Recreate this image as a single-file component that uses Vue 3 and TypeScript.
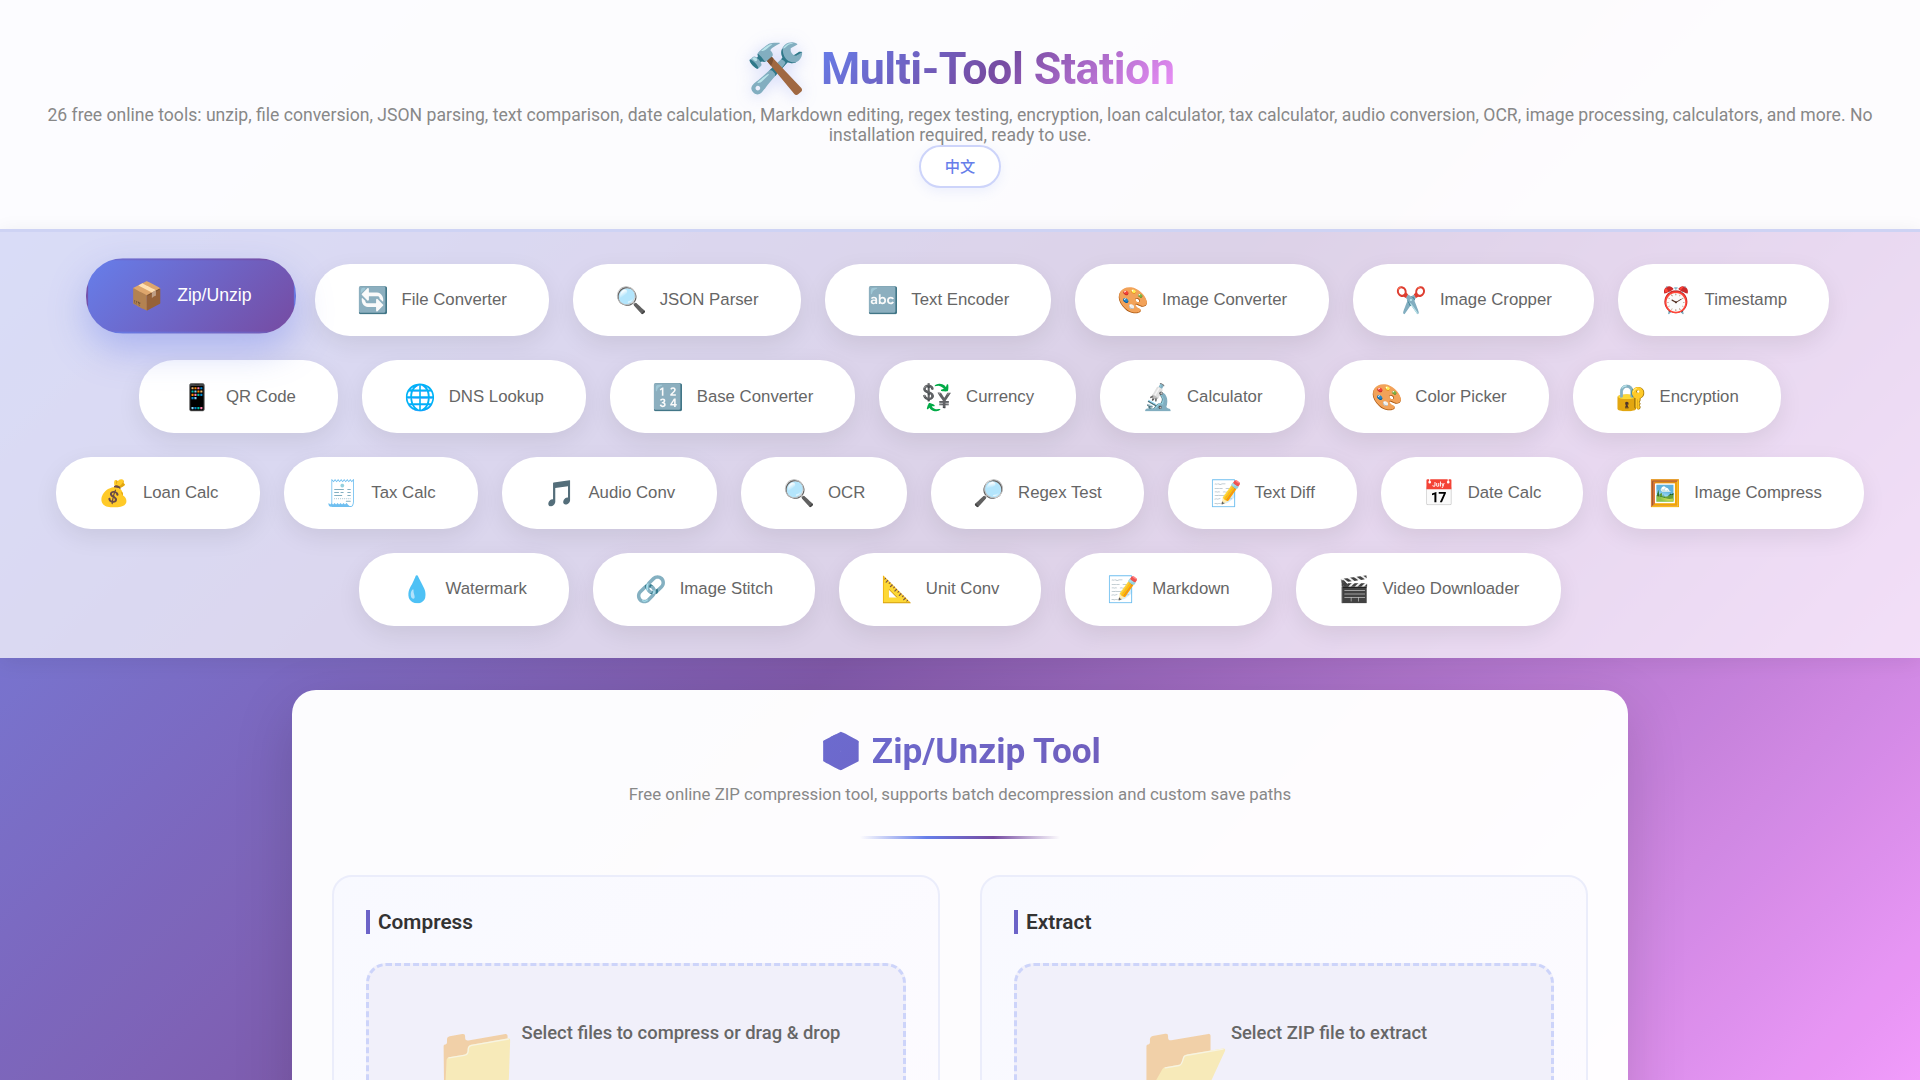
<template>
  <div class="app">
    <header class="site-header">
      <h1 class="site-title">
        <span class="title-icon">🛠️</span>
        <span class="title-text">Multi-Tool Station</span>
      </h1>
      <p class="site-desc">
        26 free online tools: unzip, file conversion, JSON parsing, text comparison, date calculation, Markdown editing, regex testing, encryption, loan calculator, tax calculator, audio conversion, OCR, image processing, calculators, and more. No installation required, ready to use.
      </p>
      <button class="lang-btn">中文</button>
    </header>

    <nav class="tool-nav">
      <button
        v-for="tool in tools"
        :key="tool.label"
        :class="['tool-tab', { active: tool.label === activeTool }]"
        @click="activeTool = tool.label"
      >
        <span class="tab-icon">{{ tool.icon }}</span>
        <span>{{ tool.label }}</span>
      </button>
    </nav>

    <main class="content">
      <div class="tool-card">
        <div class="tool-head">
          <h2>📦 Zip/Unzip Tool</h2>
          <p>Free online ZIP compression tool, supports batch decompression and custom save paths</p>
          <div class="divider"></div>
        </div>

        <div class="panels">
          <section v-for="panel in panels" :key="panel.title" class="panel">
            <h3>{{ panel.title }}</h3>
            <div class="drop-zone">
              <span class="drop-icon">{{ panel.icon }}</span>
              <span class="drop-text">{{ panel.text }}</span>
            </div>
          </section>
        </div>
      </div>
    </main>
  </div>
</template>

<script setup lang="ts">
import { ref } from 'vue'

interface Tool {
  icon: string
  label: string
}

const activeTool = ref('Zip/Unzip')

const tools: Tool[] = [
  { icon: '📦', label: 'Zip/Unzip' },
  { icon: '🔄', label: 'File Converter' },
  { icon: '🔍', label: 'JSON Parser' },
  { icon: '🔤', label: 'Text Encoder' },
  { icon: '🎨', label: 'Image Converter' },
  { icon: '✂️', label: 'Image Cropper' },
  { icon: '⏰', label: 'Timestamp' },
  { icon: '📱', label: 'QR Code' },
  { icon: '🌐', label: 'DNS Lookup' },
  { icon: '🔢', label: 'Base Converter' },
  { icon: '💱', label: 'Currency' },
  { icon: '🔬', label: 'Calculator' },
  { icon: '🎨', label: 'Color Picker' },
  { icon: '🔐', label: 'Encryption' },
  { icon: '💰', label: 'Loan Calc' },
  { icon: '🧾', label: 'Tax Calc' },
  { icon: '🎵', label: 'Audio Conv' },
  { icon: '🔍', label: 'OCR' },
  { icon: '🔎', label: 'Regex Test' },
  { icon: '📝', label: 'Text Diff' },
  { icon: '📅', label: 'Date Calc' },
  { icon: '🖼️', label: 'Image Compress' },
  { icon: '💧', label: 'Watermark' },
  { icon: '🔗', label: 'Image Stitch' },
  { icon: '📐', label: 'Unit Conv' },
  { icon: '📝', label: 'Markdown' },
  { icon: '🎬', label: 'Video Downloader' }
]

const panels = [
  { title: 'Compress', icon: '📁', text: 'Select files to compress or drag & drop' },
  { title: 'Extract', icon: '📂', text: 'Select ZIP file to extract' }
]
</script>

<style>
html,
body {
  margin: 0;
  min-height: 100vh;
}

body {
  background: linear-gradient(135deg, #667eea 0%, #764ba2 50%, #f093fb 100%) fixed;
  font-family: Roboto, "Noto Sans CJK SC", sans-serif;
}
</style>

<style scoped>
.site-header {
  background: rgba(255, 255, 255, 0.98);
  padding: 40px 32px;
  height: 229px;
  box-sizing: border-box;
  text-align: center;
}

.site-title {
  display: flex;
  align-items: center;
  justify-content: center;
  gap: 16px;
  margin: 0 0 7px;
  font-size: 44.8px;
  font-weight: 700;
  line-height: 1.2;
  letter-spacing: -0.5px;
}

.title-icon {
  font-size: 48px;
  filter: drop-shadow(0 2px 8px rgba(102, 126, 234, 0.3));
}

.title-text {
  background: linear-gradient(135deg, #667eea 0%, #764ba2 50%, #f093fb 100%);
  -webkit-background-clip: text;
  background-clip: text;
  color: transparent;
}

.site-desc {
  margin: 0;
  color: #888;
  font-size: 17.6px;
  line-height: 20px;
}

.lang-btn {
  display: block;
  margin: 0 auto;
  width: 82px;
  height: 43px;
  background: #fff;
  border: 2px solid #cdd4fa;
  border-radius: 22px;
  box-shadow: 0 4px 12px rgba(102, 126, 234, 0.1);
  color: #667eea;
  font-family: "Liberation Sans", "Noto Sans CJK SC", sans-serif;
  font-size: 15.2px;
  font-weight: 500;
  padding-bottom: 3px;
}

.tool-nav {
  display: flex;
  flex-wrap: wrap;
  justify-content: center;
  gap: 24px;
  padding: 32px;
  background: rgba(255, 255, 255, 0.75);
  border-top: 3px solid #ced3f4;
  box-shadow: 0 4px 20px rgba(0, 0, 0, 0.08);
}

.tool-tab {
  display: flex;
  align-items: center;
  gap: 12.8px;
  padding: 19.2px 40px;
  background: #fff;
  border: 2px solid transparent;
  border-radius: 35px;
  box-shadow: 0 8px 25px rgba(0, 0, 0, 0.08);
  color: #666;
  font-family: "Liberation Sans", sans-serif;
  font-size: 16.8px;
  cursor: pointer;
}

.tool-tab.active {
  background: linear-gradient(135deg, #667eea 0%, #764ba2 100%);
  box-shadow: 0 15px 35px rgba(102, 126, 234, 0.4);
  color: #fff;
  transform: translateY(-4px) scale(1.05);
}

.tab-icon {
  font-size: 25.6px;
}

.content {
  padding: 32px calc((100% - 1336px) / 2);
  background: rgba(255, 255, 255, 0.08);
}

.tool-card {
  padding: 40px;
  background: rgba(255, 255, 255, 0.98);
  border-radius: 24px;
  box-shadow: 0 20px 60px rgba(0, 0, 0, 0.15);
}

.tool-head {
  text-align: center;
  margin-bottom: 36px;
}

.tool-head h2 {
  margin: 0;
  background: linear-gradient(135deg, #667eea 0%, #764ba2 100%);
  -webkit-background-clip: text;
  background-clip: text;
  color: transparent;
  font-size: 35.2px;
  font-weight: 700;
}

.tool-head p {
  margin: 12px 0 0;
  color: #888;
  font-size: 16.8px;
}

.divider {
  width: 200px;
  height: 3px;
  margin: 32px auto 0;
  background: linear-gradient(90deg, transparent, #667eea, #764ba2, transparent);
}

.panels {
  display: grid;
  grid-template-columns: 1fr 1fr;
  gap: 40px;
}

.panel {
  padding: 33px 32px 32px;
  background: linear-gradient(135deg, #f8f9ff 0%, #fdfbff 100%);
  border: 2px solid #ebedfb;
  border-radius: 20px;
}

.panel h3 {
  margin: 0 0 29.6px;
  padding-left: 8px;
  border-left: 4px solid #6c63c8;
  color: #333;
  font-size: 20.8px;
  font-weight: 600;
}

.drop-zone {
  display: flex;
  justify-content: center;
  align-items: flex-start;
  padding: 56px 32px;
  background: #f1f0fa;
  border: 3px dashed #cdd4fa;
  border-radius: 20px;
}

.drop-icon {
  font-size: 72px;
  line-height: 1;
  margin-top: 4px;
  opacity: 0.45;
}

.drop-text {
  color: #666;
  font-size: 18.4px;
  font-weight: 500;
}
</style>
